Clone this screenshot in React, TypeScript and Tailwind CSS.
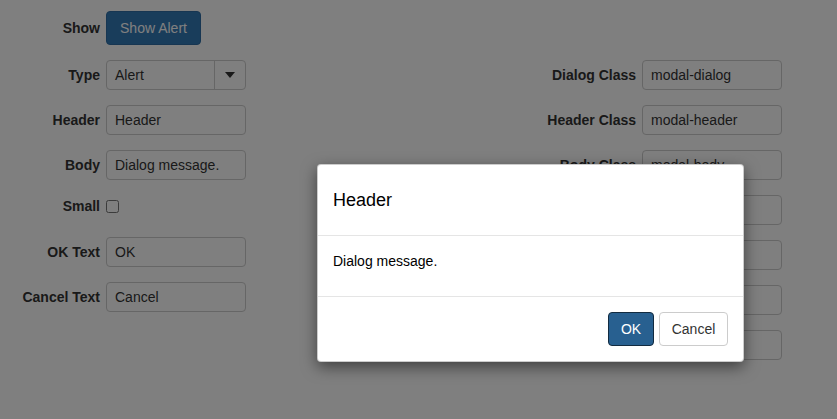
import React from 'react'

const font = { fontFamily: '"Liberation Sans", Arial, sans-serif' }

function Field({ label, value, labelWidth }: { label: string; value: string; labelWidth: string }) {
  return (
    <div className="flex h-[30px] items-center">
      <label className={`${labelWidth} text-right text-[14px] font-bold text-[#333]`}>{label}</label>
      <input
        readOnly
        value={value}
        className="ml-[6px] h-[30px] w-[140px] rounded-[4px] border border-[#ccc] bg-white pl-[8px] text-[14px] text-[#333] outline-none"
      />
    </div>
  )
}

const rightFields = [
  { label: 'Dialog Class', value: 'modal-dialog' },
  { label: 'Header Class', value: 'modal-header' },
  { label: 'Body Class', value: 'modal-body' },
  { label: 'Footer Class', value: 'modal-footer' },
  { label: 'OK Class', value: 'btn-primary' },
  { label: 'Cancel Class', value: 'btn-default' },
  { label: 'Small Class', value: 'modal-sm' },
]

export default function App() {
  return (
    <div className="relative h-[419px] w-full overflow-hidden bg-white" style={font}>
      {/* Form */}
      <div className="flex">
        {/* Left column */}
        <div className="flex w-[246px] flex-col pt-[11px]">
          <div className="flex h-[34px] items-center">
            <label className="w-[100px] text-right text-[14px] font-bold text-[#333]">Show</label>
            <button className="ml-[6px] h-[34px] w-[95px] rounded-[4px] border border-[#2e6da4] bg-[#337ab7] text-[14px] text-white">
              Show Alert
            </button>
          </div>

          <div className="mt-[15px] flex h-[30px] items-center">
            <label className="w-[100px] text-right text-[14px] font-bold text-[#333]">Type</label>
            <div className="ml-[6px] flex h-[30px] w-[140px] rounded-[4px] border border-[#ccc] bg-white">
              <span className="flex flex-1 items-center pl-[8px] text-[14px] text-[#333]">Alert</span>
              <span className="flex w-[31px] items-center justify-center border-l border-[#ccc]">
                <span className="h-0 w-0 border-x-[5px] border-t-[6px] border-x-transparent border-t-[#333]" />
              </span>
            </div>
          </div>

          <div className="mt-[15px] flex flex-col gap-[15px]">
            <Field label="Header" value="Header" labelWidth="w-[100px]" />
            <Field label="Body" value="Dialog message." labelWidth="w-[100px]" />
          </div>

          <div className="mt-[20px] flex h-[13px] items-center">
            <label className="w-[100px] text-right text-[14px] font-bold text-[#333]">Small</label>
            <input type="checkbox" className="ml-[6px] h-[13px] w-[13px]" />
          </div>

          <div className="mt-[24px] flex flex-col gap-[15px]">
            <Field label="OK Text" value="OK" labelWidth="w-[100px]" />
            <Field label="Cancel Text" value="Cancel" labelWidth="w-[100px]" />
          </div>
        </div>

        {/* Right column */}
        <div className="ml-[274px] flex flex-col gap-[15px] pt-[60px]">
          {rightFields.map((f) => (
            <Field key={f.label} label={f.label} value={f.value} labelWidth="w-[116px]" />
          ))}
        </div>
      </div>

      {/* Backdrop */}
      <div className="absolute inset-0 bg-black/50" />

      {/* Modal */}
      <div className="absolute left-[317px] top-[164px] w-[427px] rounded-[4px] border border-black/20 bg-white shadow-[0_5px_15px_rgba(0,0,0,0.5)]">
        <div className="border-b border-[#e5e5e5] px-[15px] py-[20px]">
          <h4 className="text-[18px] leading-[30px] text-[#000]">Header</h4>
        </div>
        <div className="px-[15px] pt-[15px] pb-[15px]">
          <p className="mb-[10px] text-[14px] leading-[20px] text-[#000]">Dialog message.</p>
        </div>
        <div className="flex justify-end gap-[5px] border-t border-[#e5e5e5] p-[15px]">
          <button className="h-[34px] w-[46px] rounded-[4px] border border-[#122b40] bg-[#286090] text-[14px] text-white">
            OK
          </button>
          <button className="h-[34px] w-[69px] rounded-[4px] border border-[#ccc] bg-white text-[14px] text-[#333]">
            Cancel
          </button>
        </div>
      </div>
    </div>
  )
}
